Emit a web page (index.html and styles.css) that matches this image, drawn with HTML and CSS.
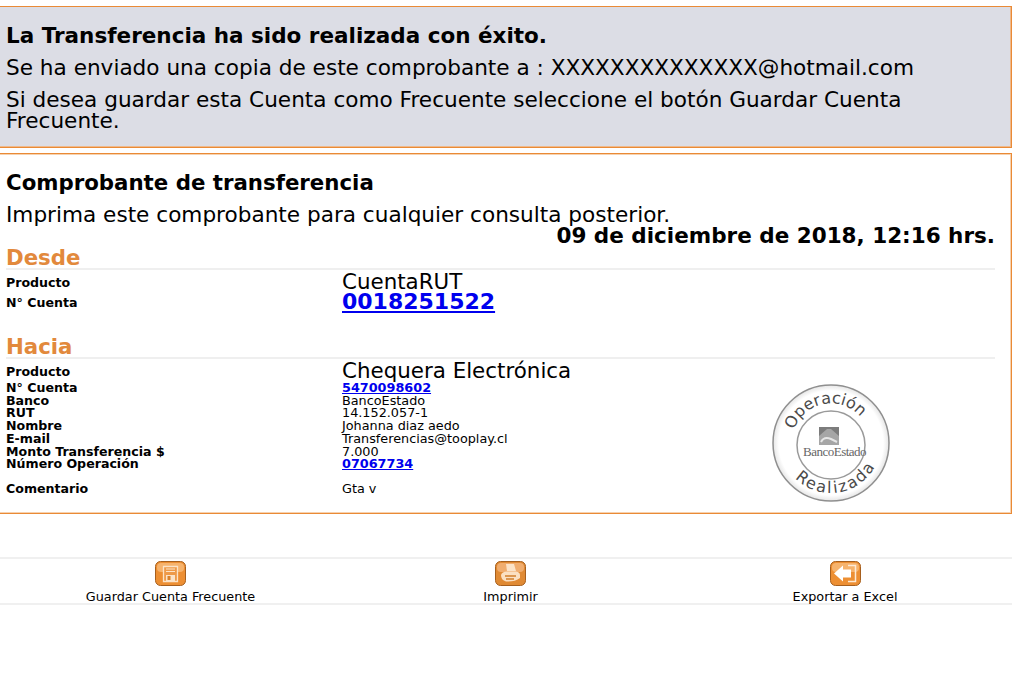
FILE: index.html
```html
<!DOCTYPE html>
<html lang="es">
<head>
<meta charset="utf-8">
<title>Comprobante de transferencia</title>
<link rel="stylesheet" href="styles.css">
</head>
<body>
<section class="box notice">
  <p class="line strong">La Transferencia ha sido realizada con éxito.</p>
  <p class="line">Se ha enviado una copia de este comprobante a : XXXXXXXXXXXXXX@hotmail.com</p>
  <p class="line">Si desea guardar esta Cuenta como Frecuente seleccione el botón Guardar Cuenta Frecuente.</p>
</section>
<section class="box receipt">
  <p class="line strong">Comprobante de transferencia</p>
  <p class="line">Imprima este comprobante para cualquier consulta posterior.</p>
  <p class="date">09 de diciembre de 2018, 12:16 hrs.</p>
  <h2 class="section-title">Desde</h2>
  <dl class="rows">
    <dt>Producto</dt><dd class="big">CuentaRUT</dd>
    <dt>N° Cuenta</dt><dd class="big"><a href="#">0018251522</a></dd>
  </dl>
  <h2 class="section-title to-title">Hacia</h2>
  <dl class="rows">
    <dt>Producto</dt><dd class="big">Chequera Electrónica</dd>
    <dt>N° Cuenta</dt><dd><a href="#">5470098602</a></dd>
    <dt>Banco</dt><dd>BancoEstado</dd>
    <dt>RUT</dt><dd>14.152.057-1</dd>
    <dt>Nombre</dt><dd>Johanna diaz aedo</dd>
    <dt>E-mail</dt><dd>Transferencias@tooplay.cl</dd>
    <dt>Monto Transferencia $</dt><dd>7.000</dd>
    <dt>Número Operación</dt><dd><a href="#">07067734</a></dd>
    <dt class="comment">Comentario</dt><dd class="comment">Gta v</dd>
  </dl>
  <svg class="stamp" width="120" height="120" viewBox="0 0 120 120">
    <defs>
      <path id="arc-top" d="M23 47 A39 39 0 0 1 99 60"/>
      <path id="arc-bottom" d="M24 95 A50 50 0 0 0 108 73"/>
      <radialGradient id="stamp-fill" cx="50%" cy="50%" r="50%">
        <stop offset="0.9" stop-color="#fff"/>
        <stop offset="1" stop-color="#e6e6e6"/>
      </radialGradient>
    </defs>
    <circle cx="60" cy="60" r="58" fill="url(#stamp-fill)" stroke="#8f8f8f" stroke-width="1.500"/>
    <circle cx="60" cy="62" r="34" fill="#fff" stroke="#9a9a9a" stroke-width="1.500"/>
    <text class="stamp-ring"><textPath href="#arc-top">Operación</textPath></text>
    <text class="stamp-ring wide"><textPath href="#arc-bottom">Realizada</textPath></text>
    <path d="M48 44 H68 V62 H48 Z" fill="#a6a6a6"/>
    <path d="M48 53 L56 46 H60 L68 53 V44 H48 Z" fill="#7c7c7c"/>
    <path d="M50 59 Q53 53 60 56 L66 59" fill="none" stroke="#e6e6e6" stroke-width="2"/>
    <text class="stamp-bank" x="32" y="73">BancoEstado</text>
  </svg>
</section>
<nav class="actions">
  <a class="action" href="#">
    <svg class="icon" width="31" height="25" viewBox="0 0 31 25">
      <rect x="0.500" y="0.500" width="30" height="24" rx="5" fill="#ed8f33" stroke="#a65f1e"/>
      <rect x="2" y="2" width="27" height="9" rx="4" fill="#f6b36d"/>
      <path d="M8.500 5.500 H22.500 V20.500 H8.500 Z" fill="#ee9a49" stroke="#fbe3c8" stroke-width="1.300"/>
      <path d="M11 8 H20 M11 10.500 H20" stroke="#fbe3c8" stroke-width="1.200"/>
      <path d="M11 14 H20 V20 H11 Z" fill="#fbe3c8"/>
      <rect x="12.500" y="15" width="3" height="4" fill="#d9822b"/>
    </svg>
    <span>Guardar Cuenta Frecuente</span>
  </a>
  <a class="action" href="#">
    <svg class="icon" width="31" height="25" viewBox="0 0 31 25">
      <rect x="0.500" y="0.500" width="30" height="24" rx="5" fill="#e08a34" stroke="#a65f1e"/>
      <rect x="2" y="2" width="27" height="9" rx="4" fill="#f0ad6f"/>
      <path d="M11 3 H19 L21 10 H12 Z" fill="#fbe3c8"/>
      <path d="M6 14 Q7 10.500 12 10.500 H21 Q25 11 25 14 V17 Q20 21 11 20.500 Q6 19 6 14 Z" fill="#fbe0c2"/>
      <path d="M10 15 H21 M11 18 H19" stroke="#d27f2c" stroke-width="1.300"/>
    </svg>
    <span>Imprimir</span>
  </a>
  <a class="action" href="#">
    <svg class="icon" width="31" height="25" viewBox="0 0 31 25">
      <rect x="0.500" y="0.500" width="30" height="24" rx="5" fill="#ed8f33" stroke="#a65f1e"/>
      <rect x="2" y="2" width="27" height="9" rx="4" fill="#f6b36d"/>
      <path d="M18 4.500 H25.500 V20.500 H18" fill="none" stroke="#fde9d4" stroke-width="1.500"/>
      <path d="M4 12.500 L13 4.500 V8.500 H21 V16.500 H13 V20.500 Z" fill="#fff"/>
    </svg>
    <span>Exportar a Excel</span>
  </a>
</nav>
</body>
</html>
```
FILE: styles.css
```css
html, body {
  margin: 0;
  padding: 0;
  background: #fff;
}
body {
  width: 1012px;
  padding-top: 6px;
  font-family: "DejaVu Sans", Verdana, sans-serif;
  color: #000;
}
.box {
  border: 1px solid #ea8a36;
  border-left: 0;
  box-sizing: border-box;
  padding-left: 6px;
  padding-right: 16px;
}
.notice {
  height: 142px;
  background: #dcdde5;
  padding-top: 18px;
  box-shadow: inset -1px -1px 0 #eeb98c;
}
.receipt {
  position: relative;
  height: 361px;
  margin-top: 5px;
  padding-top: 18px;
  box-shadow: inset 0 1px 0 #f6d2b0, inset -1px -1px 0 #f6d2b0;
}
.line {
  margin: 0 0 11px;
  font-size: 21.600px;
  line-height: 21px;
}
.strong {
  font-size: 21.500px;
  font-weight: bold;
}
.receipt .strong {
  font-size: 21.300px;
}
.date {
  margin: -11px 0 0;
  font-size: 21.500px;
  line-height: 22px;
  font-weight: bold;
  text-align: right;
}
.section-title {
  margin: 0;
  padding-top: 1px;
  font-size: 21.300px;
  line-height: 20px;
  font-weight: bold;
  color: #e2893c;
  border-bottom: 2px solid #efefef;
}
.to-title {
  margin-top: 23px;
}
.rows {
  margin: 0;
  padding-top: 3px;
  display: grid;
  grid-template-columns: 336px 1fr;
  font-size: 12.800px;
  line-height: 12.700px;
}
.rows dt {
  font-size: 12.600px;
  font-weight: bold;
  align-self: center;
}
.rows dd {
  margin: 0;
}
.rows .big {
  margin-top: -2px;
  font-size: 21.400px;
  line-height: 22px;
}
.rows .big a {
  font-size: 22px;
}
.rows a {
  color: #0000ee;
  font-weight: bold;
}
.rows .comment {
  margin-top: 12.500px;
}
.stamp {
  position: absolute;
  left: 771px;
  top: 229px;
}
.stamp-ring {
  font-size: 16px;
  fill: #4a4a4a;
}
.stamp-ring.wide {
  letter-spacing: 2px;
}
.stamp-bank {
  font-family: "Liberation Serif", serif;
  font-size: 13px;
  letter-spacing: -0.500px;
  fill: #666;
}
.actions {
  margin-top: 43px;
  width: 1016px;
  height: 44px;
  border-top: 2px solid #f0f0f0;
  border-bottom: 2px solid #f0f0f0;
  display: grid;
  grid-template-columns: 341px 339px 330px 1fr;
}
.action {
  display: flex;
  flex-direction: column;
  align-items: center;
  color: #000;
  text-decoration: none;
  font-size: 12.800px;
  line-height: 16px;
  padding-top: 1px;
}
.icon {
  display: block;
  margin-top: 1px;
  margin-bottom: 3px;
}
```
